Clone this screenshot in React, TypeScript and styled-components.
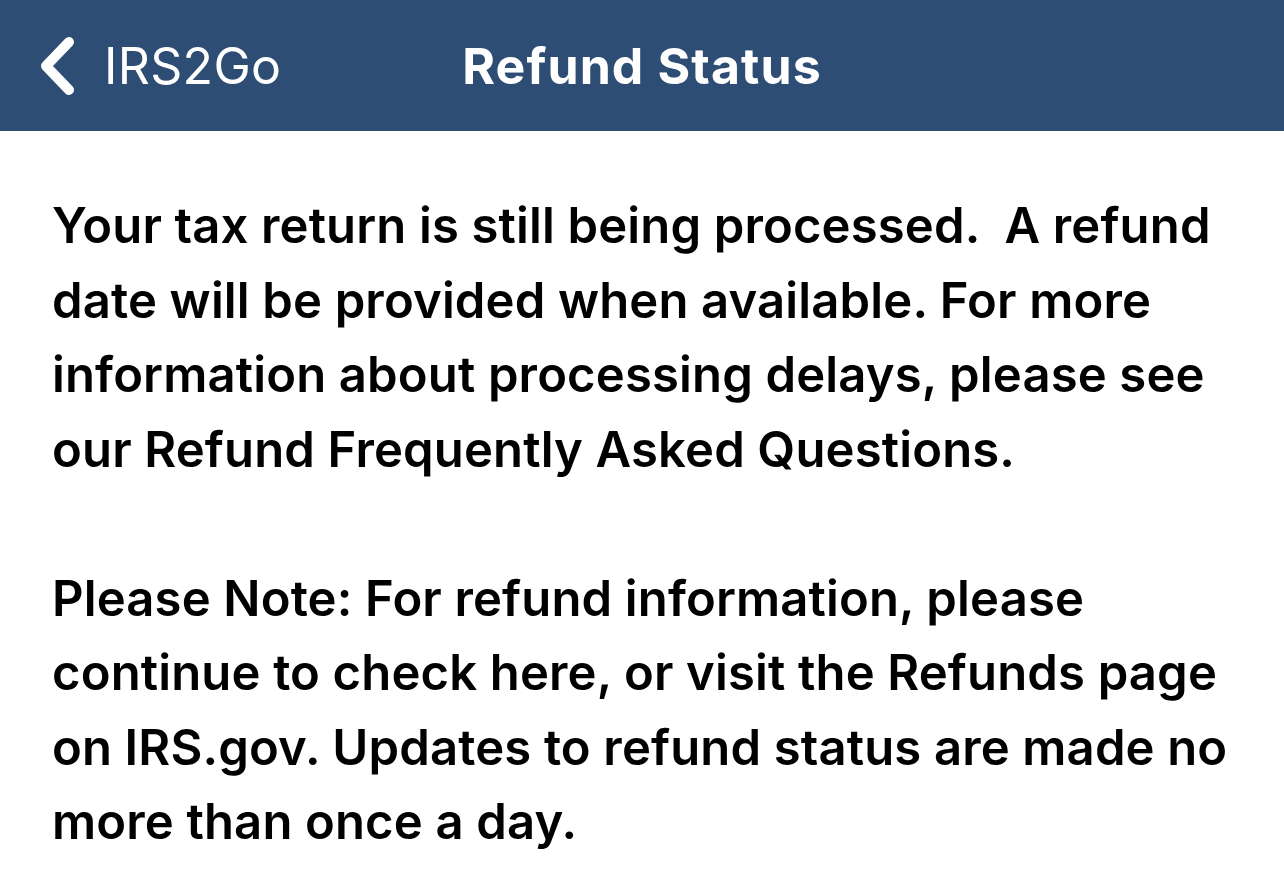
import React from "react"
import styled, { createGlobalStyle } from "styled-components"

const GlobalStyle = createGlobalStyle`
    html, body {
        margin: 0;
        padding: 0;
        background: #ffffff;
    }
    body {
        font-family: Inter, "Noto Sans", "Liberation Sans", sans-serif;
        -webkit-font-smoothing: antialiased;
    }
`

const Page = styled.div`
    width: 1284px;
    min-height: 894px;
    background: #ffffff;
`

const NavBar = styled.header`
    height: 131px;
    background: #2e4d74;
    display: grid;
    grid-template-columns: 1fr auto 1fr;
    align-items: center;
    color: #ffffff;
`

const BackButton = styled.button`
    display: flex;
    align-items: center;
    gap: 27px;
    padding: 0 0 0 37px;
    background: none;
    border: none;
    color: #ffffff;
    font-family: inherit;
    font-size: 50px;
    font-weight: 400;
    letter-spacing: 0.3px;
    cursor: pointer;
    justify-self: start;
`

const Title = styled.h1`
    margin: 0;
    font-size: 50px;
    font-weight: 700;
    letter-spacing: 1.1px;
`

const Content = styled.main`
    padding: 58px 52px 0 52px;
`

const Paragraph = styled.p`
    margin: 0 0 74.5px 0;
    font-size: 49px;
    font-weight: 600;
    line-height: 74.5px;
    color: #000000;
    white-space: pre-wrap;
    letter-spacing: 0.15px;
`

const Chevron = () => (
    <svg width="40" height="62" viewBox="0 0 40 62">
        <path d="M32 7 L9 31 L32 55" fill="none" stroke="#ffffff" strokeWidth="10" strokeLinecap="round" strokeLinejoin="round" />
    </svg>
)

function App() {
    return (
        <>
            <GlobalStyle />
            <Page>
                <NavBar>
                    <BackButton>
                        <Chevron />
                        IRS2Go
                    </BackButton>
                    <Title>Refund Status</Title>
                    <div />
                </NavBar>
                <Content>
                    <Paragraph>
                        {"Your tax return is still being processed.  A refund"}<br />
                        date will be provided when available. For more<br />
                        information about processing delays, please see<br />
                        our Refund Frequently Asked Questions.
                    </Paragraph>
                    <Paragraph>
                        Please Note: For refund information, please<br />
                        continue to check here, or visit the Refunds page<br />
                        on IRS.gov. Updates to refund status are made no<br />
                        more than once a day.
                    </Paragraph>
                </Content>
            </Page>
        </>
    )
}

export default App
